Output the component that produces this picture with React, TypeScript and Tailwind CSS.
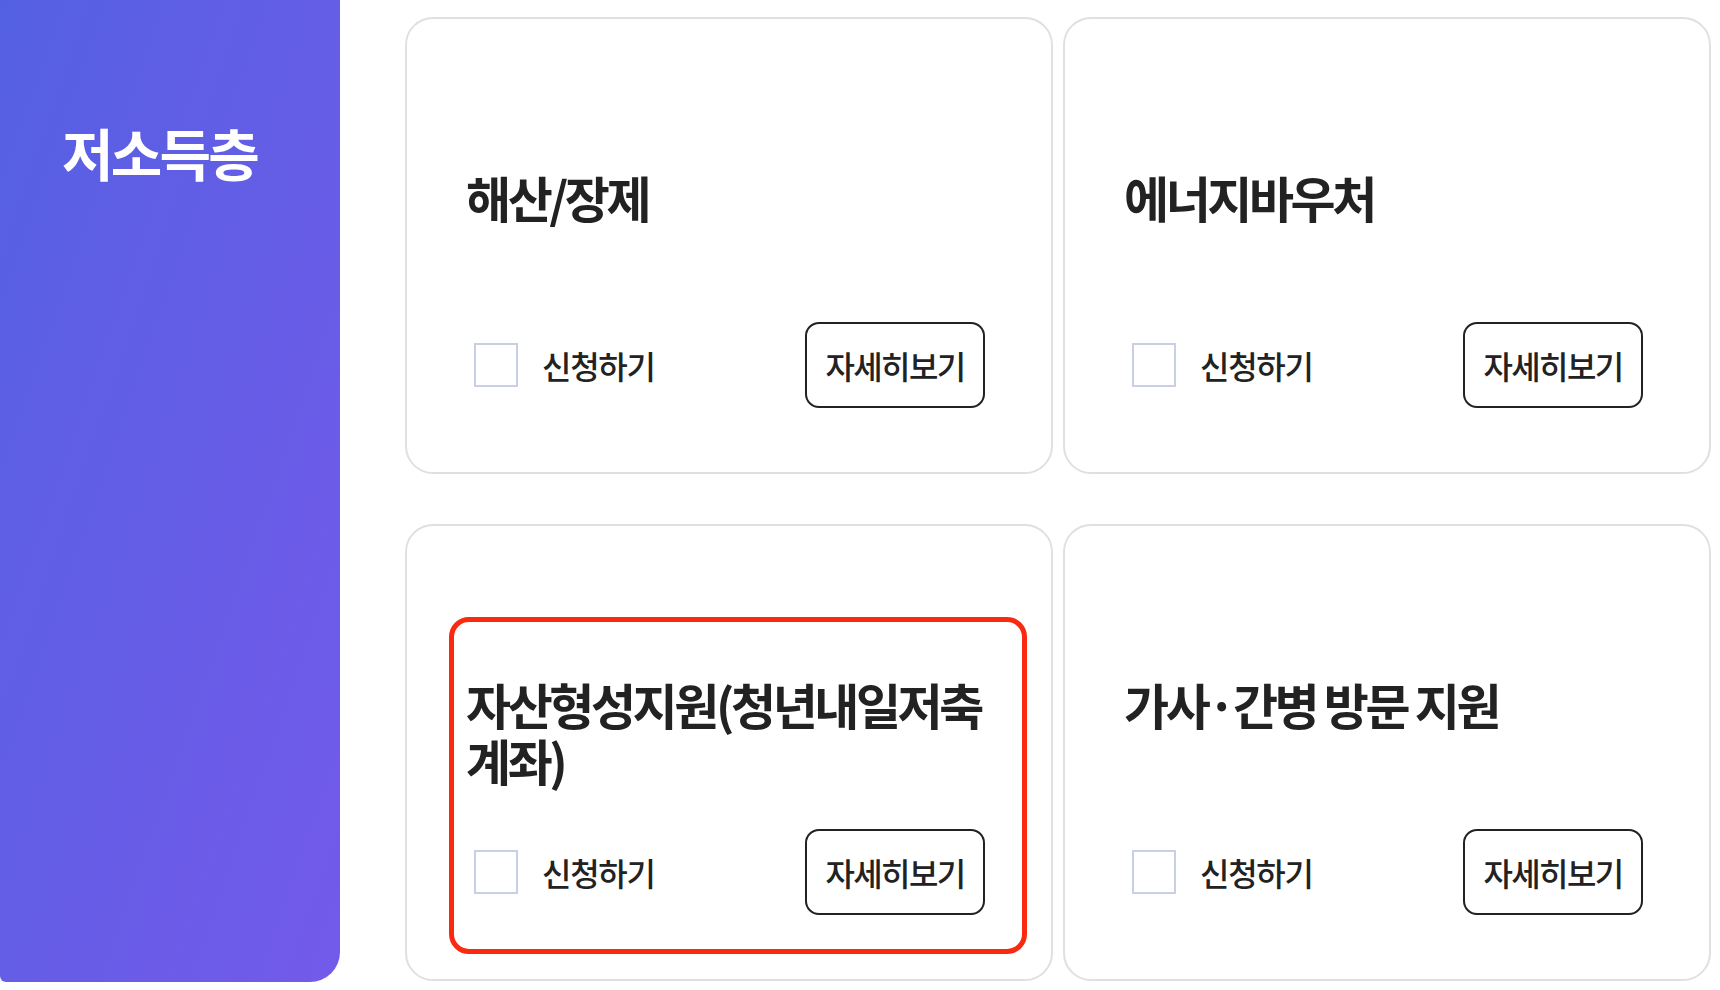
import React from "react";

type Item = { title: string; highlight?: boolean };

const items: Item[] = [
  { title: "해산/장제" },
  { title: "에너지바우처" },
  { title: "자산형성지원(청년내일저축계좌)", highlight: true },
  { title: "가사·간병 방문 지원" },
];

const font = { fontFamily: '"Noto Sans CJK KR", "Noto Sans", sans-serif' };

function Card({ item }: { item: Item }) {
  return (
    <div className="relative flex h-[457px] flex-col rounded-[28px] border-2 border-[#e0e0e0] bg-white pb-[64px] pl-[62px] pr-[66px] pt-[150px]">
      {item.highlight && (
        <div className="pointer-events-none absolute left-[42px] top-[91px] h-[337px] w-[578px] rounded-[20px] border-[5px] border-[#fa2a10]" />
      )}
      <h3 className="-ml-[3px] -mr-[12px] text-[49px] font-bold leading-[56px] tracking-[-0.07em] text-[#222]">
        {item.title}
      </h3>
      <div className="mt-auto flex items-center justify-between">
        <label className="flex items-center gap-[24px] pl-[5px]">
          <span className="block h-[44px] w-[44px] border-2 border-[#c9d0e4] bg-white" />
          <span className="text-[32px] font-medium tracking-[-0.04em] text-[#222]">신청하기</span>
        </label>
        <button className="flex h-[86px] w-[180px] items-center justify-center rounded-[14px] border-2 border-[#222] bg-white text-[32px] font-medium tracking-[-0.05em] text-[#222]">
          자세히보기
        </button>
      </div>
    </div>
  );
}

export default function App() {
  return (
    <div className="flex h-[990px] w-[1720px] overflow-hidden bg-white" style={font}>
      <aside className="h-[982px] w-[340px] shrink-0 rounded-bl-[6px] rounded-br-[30px] bg-gradient-to-br from-[#5460e2] to-[#735aeb] pl-[62px] pt-[112px]">
        <h2 className="text-[56px] font-bold leading-[80px] tracking-[-0.05em] text-white">저소득층</h2>
      </aside>
      <main className="ml-[65px] grid flex-1 grid-cols-2 content-start gap-x-[10px] gap-y-[50px] pr-[9px] pt-[17px]">
        {items.map((item) => (
          <Card key={item.title} item={item} />
        ))}
      </main>
    </div>
  );
}
